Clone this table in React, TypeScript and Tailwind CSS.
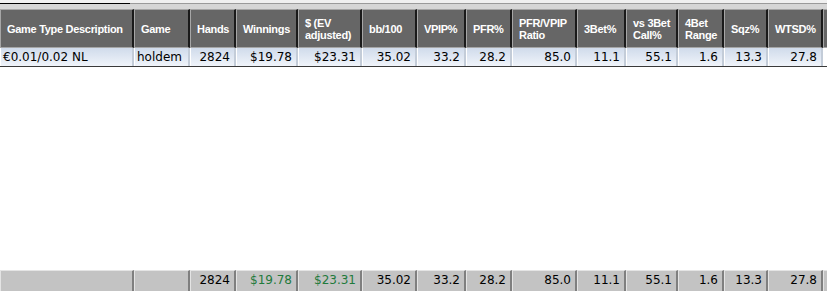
import React from 'react';

type Col = {
  label: React.ReactNode;
  w: number;
  value: string;
  total: string;
  left?: boolean;
  green?: boolean;
};

const cols: Col[] = [
  { label: 'Game Type Description', w: 134, value: '€0.01/0.02 NL', total: '', left: true },
  { label: 'Game', w: 56, value: 'holdem', total: '', left: true },
  { label: 'Hands', w: 46, value: '2824', total: '2824' },
  { label: 'Winnings', w: 62, value: '$19.78', total: '$19.78', green: true },
  { label: <>$ (EV<br />adjusted)</>, w: 64, value: '$23.31', total: '$23.31', green: true },
  { label: 'bb/100', w: 55, value: '35.02', total: '35.02' },
  { label: 'VPIP%', w: 49, value: '33.2', total: '33.2' },
  { label: 'PFR%', w: 46, value: '28.2', total: '28.2' },
  { label: <>PFR/VPIP<br />Ratio</>, w: 65, value: '85.0', total: '85.0' },
  { label: '3Bet%', w: 49, value: '11.1', total: '11.1' },
  { label: <>vs 3Bet<br />Call%</>, w: 52, value: '55.1', total: '55.1' },
  { label: <>4Bet<br />Range</>, w: 46, value: '1.6', total: '1.6' },
  { label: 'Sqz%', w: 44, value: '13.3', total: '13.3' },
  { label: 'WTSD%', w: 55, value: '27.8', total: '27.8' },
];

const headFont = { fontFamily: '"Liberation Sans", Arial, sans-serif' };
const cellFont = { fontFamily: '"DejaVu Sans", Verdana, sans-serif' };

export default function App() {
  return (
    <div className="w-[827px] h-[291px] bg-white flex flex-col overflow-hidden">
      {/* top strip */}
      <div className="h-[9px] shrink-0 bg-[#d6d6d6] flex flex-col">
        <div className="h-[3px] bg-[#f0f0f0]" />
        <div className="h-[1px] flex">
          <div className="w-[130px] bg-black" />
          <div className="flex-1 bg-[#9a9a9a]" />
        </div>
      </div>

      {/* header */}
      <div className="h-[39px] shrink-0 flex bg-[#1a1a1a]" style={headFont}>
        {cols.map((c, i) => (
          <div
            key={i}
            style={{ width: c.w }}
            className="shrink-0 h-full border-t border-l border-b border-[#a6a6a6] border-r-2 border-r-[#1a1a1a] bg-[#666666] text-white font-bold text-[11px] leading-[12px] tracking-[-0.3px] pl-[6px] flex items-center"
          >
            <span>{c.label}</span>
          </div>
        ))}
        <div className="flex-1 h-full border-t border-l border-b border-[#a6a6a6] bg-[#666666]" />
      </div>

      {/* data row */}
      <div className="h-[19px] shrink-0 flex border-b border-[#3a3a3a]" style={cellFont}>
        {cols.map((c, i) => (
          <div
            key={i}
            style={{ width: c.w }}
            className={`shrink-0 h-full bg-gradient-to-b from-[#d0dbeb] to-[#f0f4fa] border-r-2 border-r-[#c3ccd8] border-l border-l-white text-[12px] leading-[18px] text-black ${c.left ? 'text-left pl-[2px]' : 'text-right pr-[4px]'}`}
          >
            {c.value}
          </div>
        ))}
        <div className="flex-1 h-full" />
      </div>

      <div className="flex-1" />

      {/* totals */}
      <div className="h-[21px] shrink-0 flex mt-[2px]" style={cellFont}>
        {cols.map((c, i) => (
          <div
            key={i}
            style={{ width: c.w }}
            className={`shrink-0 h-full bg-[#c3c3c3] border-t border-l border-[#e4e4e4] border-r-2 border-r-[#7f7f7f] text-[12px] leading-[19px] text-right pr-[4px] ${c.green ? 'text-[#1f7a3c]' : 'text-black'}`}
          >
            {c.total}
          </div>
        ))}
        <div className="flex-1 h-full bg-[#c3c3c3] border-t border-l border-[#e4e4e4]" />
      </div>
    </div>
  );
}
